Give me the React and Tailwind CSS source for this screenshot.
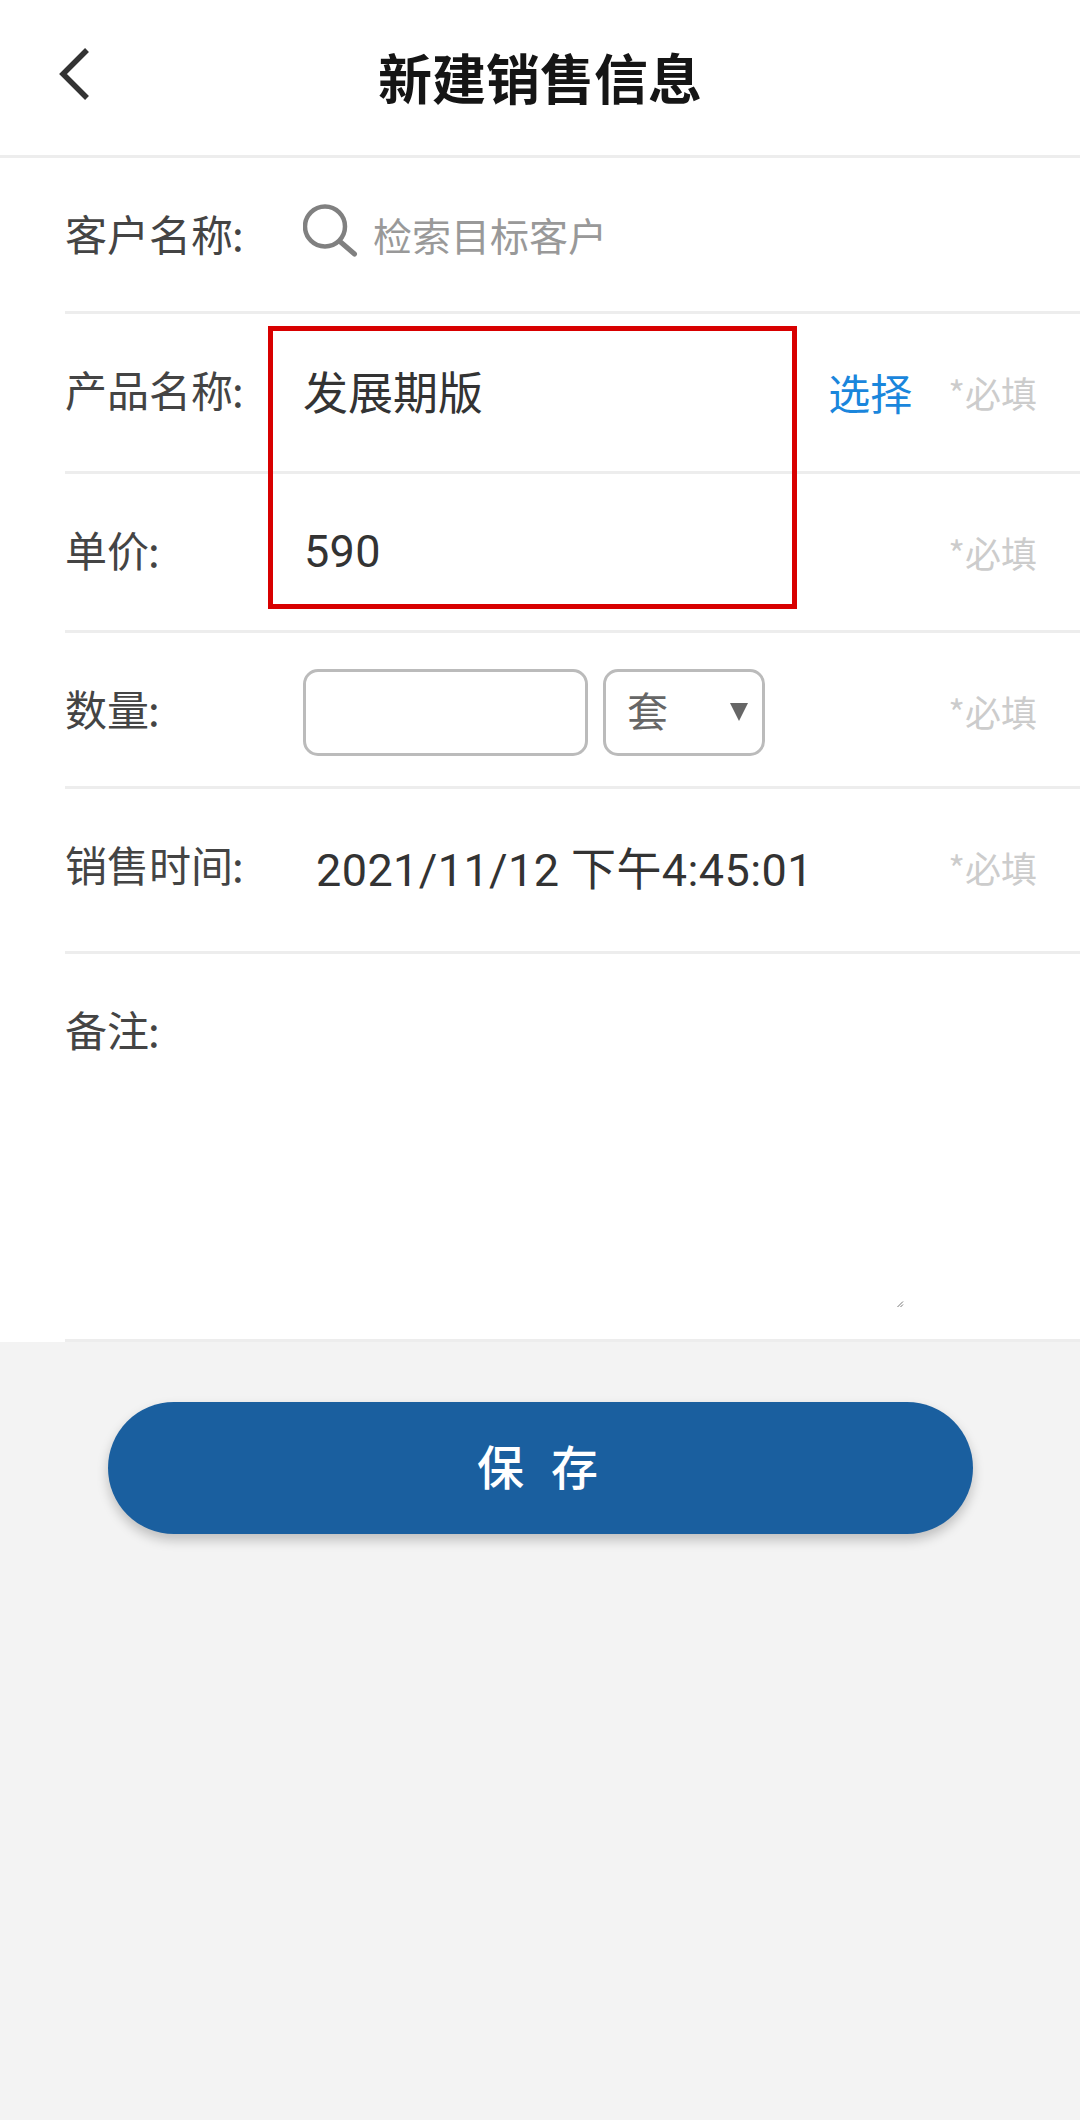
import React, { useState } from 'react';

const Row = ({ label, className, required, action, children }) => (
  <div className={`ml-[65px] flex items-start border-b-[3px] border-[#ededed] ${className}`}>
    <label className="mt-[45px] w-[238px] shrink-0 text-[42px] leading-[60px] text-[#444]">
      {label}
      <span className="-ml-px">:</span>
    </label>
    <div className="flex-1">{children}</div>
    {action}
    {required && (
      <span className="mt-[48px] mr-[43px] ml-[36px] text-[36px] leading-[60px] text-[#ccc]">
        *必填
      </span>
    )}
  </div>
);

const BackIcon = () => (
  <svg className="h-[54px] w-[34px]" viewBox="0 0 34 54" fill="none" stroke="#333" strokeWidth="5.5">
    <path d="M29 3L5 27L29 51" />
  </svg>
);

const SearchIcon = () => (
  <svg className="h-[54px] w-[56px]" viewBox="0 0 56 54" fill="none" stroke="#808080" strokeWidth="4.5">
    <circle cx="22" cy="23.5" r="20" />
    <path d="M37 38.5L51.5 51" strokeWidth="5" strokeLinecap="round" />
  </svg>
);

export default function App() {
  const [quantity, setQuantity] = useState('');

  return (
    <div className="min-h-[2120px] w-[1080px] bg-[#f3f3f3] font-['Noto_Sans_CJK_SC',sans-serif]">
      {/* Header */}
      <header className="grid h-[158px] grid-cols-[1fr_auto_1fr] items-center border-b-[3px] border-[#ededed] bg-white">
        <button className="mb-[8px] ml-[58px] w-[34px]">
          <BackIcon />
        </button>
        <h1 className="-mt-[2px] text-[54px] leading-[80px] font-bold text-[#151515]">新建销售信息</h1>
      </header>

      {/* Form */}
      <main className="relative bg-white">
        <Row label="客户名称" className="h-[156px]">
          <div className="flex items-start">
            <div className="mt-[45px]">
              <SearchIcon />
            </div>
            <span className="mt-[46px] ml-[14px] text-[39px] leading-[60px] text-[#999]">检索目标客户</span>
          </div>
        </Row>

        <Row
          label="产品名称"
          className="h-[160px]"
          required
          action={<button className="mt-[48px] text-[42px] leading-[60px] text-[#1a86dc]">选择</button>}
        >
          <p className="mt-[47px] text-[45px] leading-[60px] text-[#333]">发展期版</p>
        </Row>

        <Row label="单价" className="h-[159px]" required>
          <p className="mt-[48px] ml-[1px] font-['Roboto','Noto_Sans_CJK_SC',sans-serif] text-[45px] leading-[60px] tracking-[0.3px] text-[#333]">
            590
          </p>
        </Row>

        <Row label="数量" className="h-[156px]" required>
          <div className="mt-[36px] flex gap-[15px]">
            <input
              value={quantity}
              onChange={(e) => setQuantity(e.target.value)}
              className="h-[87px] w-[285px] rounded-[15px] border-[3px] border-[#bbb] px-5 text-[42px]"
            />
            <button className="flex h-[87px] w-[162px] items-center justify-between rounded-[15px] border-[3px] border-[#bbb] pr-[14px] pl-[21px] text-[41px] leading-[60px] text-[#666]">
              <span className="-mt-[7px]">套</span>
              <svg className="-mt-[2px] h-[18px] w-[18px]" viewBox="0 0 18 18" fill="#666">
                <path d="M0 0H18L9 18Z" />
              </svg>
            </button>
          </div>
        </Row>

        <Row label="销售时间" className="h-[165px]" required>
          <p className="mt-[52px] ml-[13px] font-['Roboto','Noto_Sans_CJK_SC',sans-serif] text-[45px] leading-[60px] tracking-[0.4px] whitespace-nowrap text-[#333]">
            2021/11/12 下午4:45:01
          </p>
        </Row>

        <Row label="备注" className="h-[388px]">
          {/* Textarea resize grip */}
          <div className="flex h-[354px] w-[601px] items-end justify-end">
            <svg className="h-[7px] w-[7px]" viewBox="0 0 7 7" stroke="#777" strokeWidth="1">
              <path d="M0.5 6L6 0.5M3.5 6L6 3.5" />
            </svg>
          </div>
        </Row>

        {/* Highlight around product name and price */}
        <div className="pointer-events-none absolute top-[168px] left-[268px] h-[283px] w-[529px] border-[5px] border-[#d80000]" />
      </main>

      <div className="flex justify-center pt-[60px]">
        <button className="h-[132px] w-[865px] rounded-full bg-[#1a5f9f] pr-[5px] pb-[5px] text-[47px] font-medium text-white shadow-[0_6px_12px_rgba(0,0,0,0.22)]">
          <span className="mr-[27px]">保</span>
          <span>存</span>
        </button>
      </div>
    </div>
  );
}
